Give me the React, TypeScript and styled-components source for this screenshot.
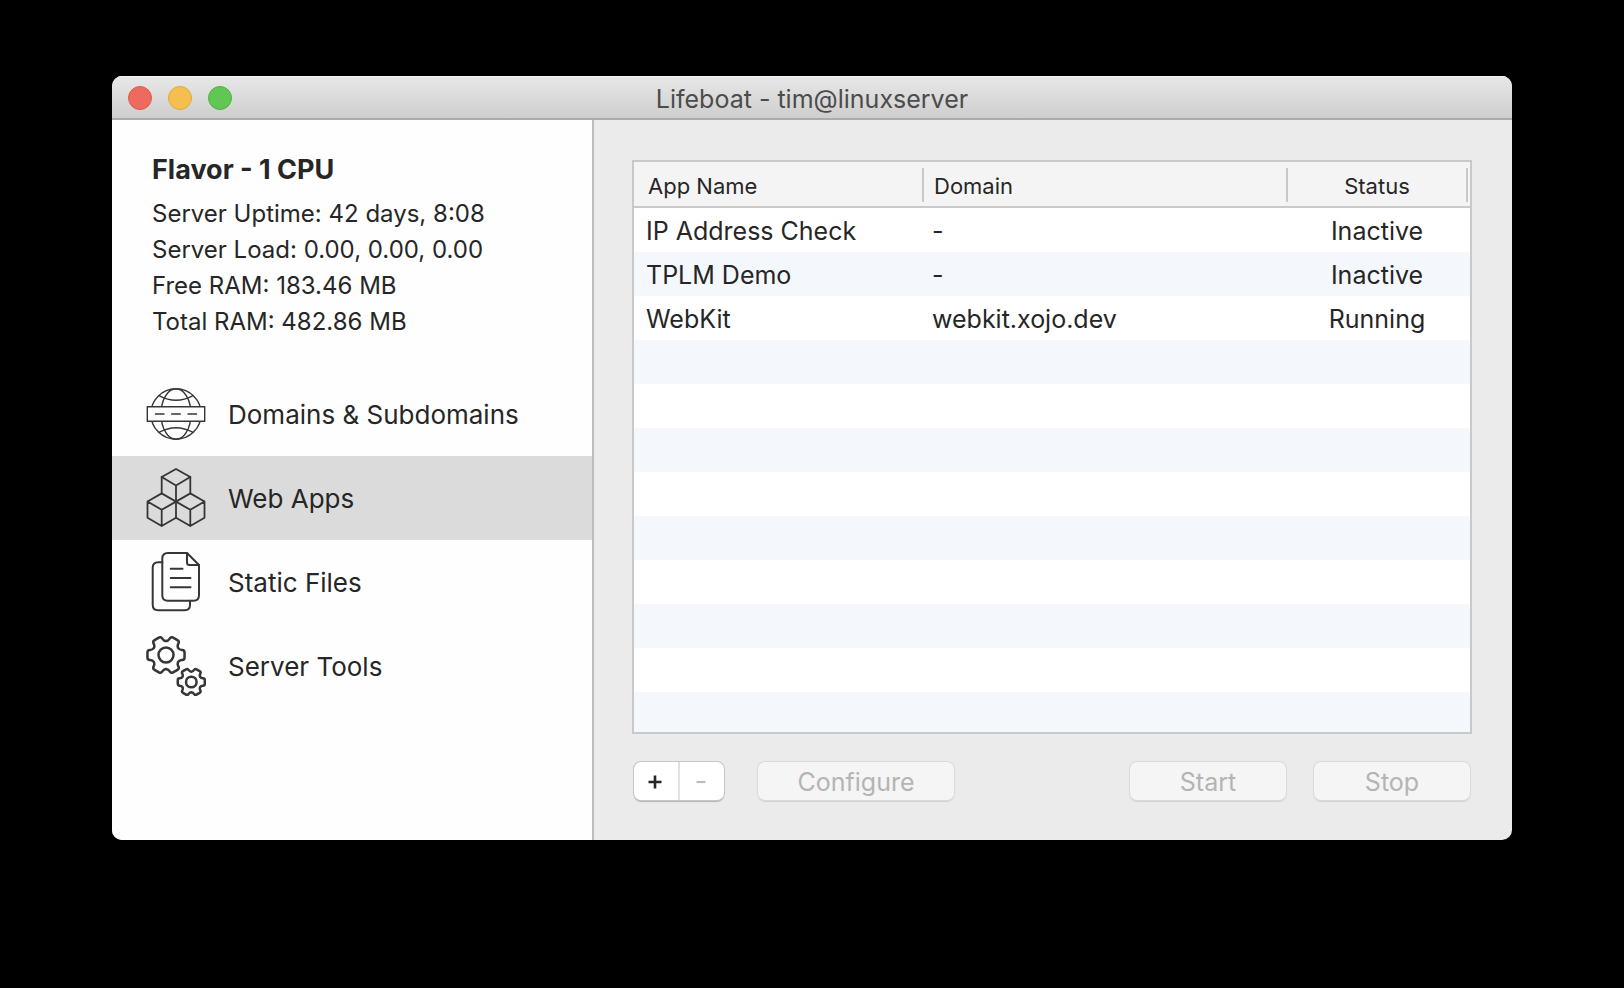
import React, { useState } from "react";
import styled, { createGlobalStyle } from "styled-components";

const GlobalStyle = createGlobalStyle`
  *, *::before, *::after { box-sizing: border-box; }
  body {
    margin: 0;
    background: #000;
    color: #262626;
    font-family: Inter, "Liberation Sans", sans-serif;
    font-size: 25px;
  }
  button { font: inherit; }
`;

const Desktop = styled.main`
  min-height: 100vh;
  padding: 76px 112px;
  background: #000;
`;

const Window = styled.section`
  min-width: 1160px;
  overflow: hidden;
  border-radius: 10px;
  background: #ebebeb;
`;

const TitleBar = styled.header`
  display: grid;
  grid-template-columns: 1fr auto 1fr;
  align-items: center;
  height: 44px;
  padding: 2px 16px 0;
  border-bottom: 2px solid #ababab;
  background: linear-gradient(#e8e8e8, #cecece);
  box-shadow: inset 0 1px 0 #f4f4f4;
`;

const Lights = styled.div`
  display: flex;
  gap: 16px;
`;

const Light = styled.button<{ $fill: string; $edge: string }>`
  width: 24px;
  height: 24px;
  padding: 0;
  border: 1px solid ${(p) => p.$edge};
  border-radius: 50%;
  background: ${(p) => p.$fill};
`;

const Title = styled.h1`
  margin: 0;
  padding-top: 2px;
  color: #4c4c4c;
  font-size: 25px;
  font-weight: 400;
  line-height: 32px;
`;

const Body = styled.div`
  display: grid;
  grid-template-columns: 482px minmax(0, 1fr);
`;

const Sidebar = styled.aside`
  border-right: 2px solid #bdbdbd;
  background: #fefefe;
`;

const Info = styled.div`
  padding: 34px 40px 32px;
`;

const Flavor = styled.h2`
  margin: 0 0 10px;
  font-size: 27px;
  font-weight: 700;
  line-height: 32px;
`;

const Stat = styled.p`
  margin: 0;
  font-size: 24px;
  line-height: 36px;
`;

const NavItem = styled.button<{ $active: boolean }>`
  display: flex;
  align-items: center;
  gap: 22px;
  width: 100%;
  height: 84px;
  padding: 0 34px;
  border: 0;
  background: ${(p) => (p.$active ? "#dbdbdb" : "transparent")};
  color: #262626;
  font-size: 26px;
  text-align: left;
`;

const NavLabel = styled.span`
  padding-top: 2px;
  line-height: 32px;
`;

const Glyph = styled.svg`
  flex: none;
  width: 60px;
  height: 60px;
  fill: none;
  stroke: #363636;
  stroke-linejoin: round;
  stroke-linecap: round;
`;

const Content = styled.div`
  padding: 40px 40px 40px 38px;
`;

const TableFrame = styled.div`
  border: 2px solid #c9c9c9;
  background: #fff;
`;

const Table = styled.table`
  width: 100%;
  border-collapse: separate;
  border-spacing: 0;
  table-layout: fixed;
`;

const NameCol = styled.col`
  width: 290px;
`;
const StatusCol = styled.col`
  width: 180px;
`;
const EdgeCol = styled.col`
  width: 2px;
`;

const HeadCell = styled.th`
  height: 46px;
  padding: 6px 0 4px;
  border-bottom: 2px solid #c9c9c9;
  background: #f4f4f4;
  font-size: 22px;
  font-weight: 400;
`;

const HeadLabel = styled.div<{ $align?: "left" | "center"; $inset?: number }>`
  padding-top: 2px;
  padding-left: ${(p) => p.$inset ?? 0}px;
  border-right: 2px solid #c9c9c9;
  line-height: 32px;
  text-align: ${(p) => p.$align ?? "left"};
`;

const Row = styled.tr`
  height: 44px;
  &:nth-child(even) { background: #f4f7fc; }
  &:last-child { height: 40px; }
`;

const Cell = styled.td<{ $align?: "left" | "center"; $inset?: number }>`
  padding: 2px 2px 0 ${(p) => p.$inset ?? 0}px;
  line-height: 32px;
  text-align: ${(p) => p.$align ?? "left"};
`;

const Actions = styled.div`
  display: flex;
  align-items: center;
  margin-top: 28px;
  padding: 0 2px;
`;

const Segmented = styled.div`
  display: grid;
  grid-template-columns: 44px 46px;
  height: 38px;
  margin-right: 34px;
  border-radius: 7px;
  background: #fff;
  box-shadow: 0 0 0 1px #c6c6c6, 0 2px 1px #b4b4b4;
`;

const Segment = styled.button`
  display: flex;
  align-items: center;
  justify-content: center;
  padding: 2px 2px 0 0;
  border: 0;
  background: transparent;
  color: #262626;
  & + & { border-left: 2px solid #e1e1e1; }
  &:disabled { color: #bdbdbd; }
`;

const SegmentGlyph = styled.svg`
  width: 14px;
  height: 14px;
  stroke: currentColor;
`;

const PushButton = styled.button<{ $width: number }>`
  width: ${(p) => p.$width}px;
  height: 38px;
  padding: 2px 0 0;
  border: 0;
  border-radius: 7px;
  background: #f5f5f5;
  box-shadow: 0 0 0 1px #dadada, 0 2px 1px #d2d2d2;
  color: #b4b4b4;
  line-height: 36px;
`;

const RunControls = styled.div`
  display: flex;
  gap: 28px;
  margin-left: auto;
`;

type Point = [number, number];

// Outline of a six-toothed gear with softened corners.
function gearPath(cx: number, cy: number, outer: number): string {
  const root = outer * 0.74;
  const pts: Point[] = [];
  const at = (deg: number, r: number) => {
    const a = (deg * Math.PI) / 180;
    pts.push([cx + r * Math.cos(a), cy + r * Math.sin(a)]);
  };
  for (let t = 0; t < 360; t += 60) {
    at(t - 21, root);
    at(t - 15, outer);
    at(t + 15, outer);
    at(t + 21, root);
  }
  const cut = outer * 0.13;
  const toward = ([x, y]: Point, [u, v]: Point) => {
    const len = Math.hypot(u - x, v - y);
    return `${(x + ((u - x) * cut) / len).toFixed(2)} ${(y + ((v - y) * cut) / len).toFixed(2)}`;
  };
  return (
    pts
      .map((p, i) => {
        const prev = pts[(i + pts.length - 1) % pts.length];
        const next = pts[(i + 1) % pts.length];
        return `${i ? "L" : "M"}${toward(p, prev)}Q${p[0].toFixed(2)} ${p[1].toFixed(2)} ${toward(p, next)}`;
      })
      .join("") + "Z"
  );
}

const GlobeIcon = () => (
  <Glyph viewBox="0 0 60 60" strokeWidth="1.4" aria-hidden="true">
    <circle cx="30" cy="30" r="25.2" />
    <ellipse cx="30" cy="30" rx="15" ry="25.2" />
    <path d="M13 11.6Q30 21 47 11.6M13 48.4Q30 39 47 48.4" />
    <path d="M1.3 22.7H58.7V37.3H1.3Z" fill="#fefefe" strokeLinejoin="miter" />
    <path d="M9.5 30H18M25.7 30H34.3M42 30H50.5" />
  </Glyph>
);

const CubesIcon = () => (
  <Glyph viewBox="0 0 60 60" strokeWidth="1.8" aria-hidden="true">
    <path d="M30 1L44.3 9V25.4L30 33.6L15.7 25.4V9Z" />
    <path d="M15.7 9L30 17.6L44.3 9M30 17.6V49.7" />
    <path d="M15.7 25.4L1.5 33.5V49.7L15.7 58L30 49.7M1.5 33.5L15.7 41.8L30 33.6M15.7 41.8V58" />
    <path d="M44.3 25.4L58.5 33.5V49.7L44.3 58L30 49.7M58.5 33.5L44.3 41.8L30 33.6M44.3 41.8V58" />
  </Glyph>
);

const FilesIcon = () => (
  <Glyph viewBox="0 0 60 60" strokeWidth="2" aria-hidden="true">
    <path d="M16.3 10.3H12.2Q6.7 10.3 6.7 15.8V52.8Q6.7 58.3 12.2 58.3H38.5Q44 58.3 44 52.8V48.8" />
    <path d="M41 1H21.8Q16.3 1 16.3 6.5V43.3Q16.3 48.8 21.8 48.8H47.5Q53 48.8 53 43.3V13Z" />
    <path d="M41 1V10.5Q41 13 43.5 13H53M24.7 16.7H36.5M24.7 26H44.5M24.7 35.3H44.5" />
  </Glyph>
);

const GearsIcon = () => (
  <Glyph viewBox="0 0 60 60" strokeWidth="2.5" aria-hidden="true">
    <path d={gearPath(20, 19, 19.2)} />
    <circle cx="20" cy="19" r="7.5" />
    <path d={gearPath(45.3, 46, 14)} />
    <circle cx="45.3" cy="46" r="5.3" />
  </Glyph>
);

const sections = [
  { label: "Domains & Subdomains", Icon: GlobeIcon },
  { label: "Web Apps", Icon: CubesIcon },
  { label: "Static Files", Icon: FilesIcon },
  { label: "Server Tools", Icon: GearsIcon },
];

const stats = [
  "Server Uptime: 42 days, 8:08",
  "Server Load: 0.00, 0.00, 0.00",
  "Free RAM: 183.46 MB",
  "Total RAM: 482.86 MB",
];

const apps = [
  { name: "IP Address Check", domain: "-", status: "Inactive" },
  { name: "TPLM Demo", domain: "-", status: "Inactive" },
  { name: "WebKit", domain: "webkit.xojo.dev", status: "Running" },
];

const VISIBLE_ROWS = 12;

export default function App() {
  const [section, setSection] = useState("Web Apps");

  return (
    <>
      <GlobalStyle />
      <Desktop>
        <Window>
          <TitleBar>
            <Lights>
              <Light $fill="#ed6a5f" $edge="#dc5b50" aria-label="Close" />
              <Light $fill="#f5bf50" $edge="#e0a93b" aria-label="Minimize" />
              <Light $fill="#62c655" $edge="#53b144" aria-label="Zoom" />
            </Lights>
            <Title>Lifeboat - tim@linuxserver</Title>
          </TitleBar>
          <Body>
            <Sidebar>
              <Info>
                <Flavor>Flavor - 1 CPU</Flavor>
                {stats.map((line) => (
                  <Stat key={line}>{line}</Stat>
                ))}
              </Info>
              <nav>
                {sections.map(({ label, Icon }) => (
                  <NavItem
                    key={label}
                    $active={label === section}
                    aria-current={label === section ? "page" : undefined}
                    onClick={() => setSection(label)}
                  >
                    <Icon />
                    <NavLabel>{label}</NavLabel>
                  </NavItem>
                ))}
              </nav>
            </Sidebar>
            <Content>
              <TableFrame>
                <Table>
                  <colgroup>
                    <NameCol />
                    <col />
                    <StatusCol />
                    <EdgeCol />
                  </colgroup>
                  <thead>
                    <tr>
                      <HeadCell scope="col">
                        <HeadLabel $inset={14}>App Name</HeadLabel>
                      </HeadCell>
                      <HeadCell scope="col">
                        <HeadLabel $inset={10}>Domain</HeadLabel>
                      </HeadCell>
                      <HeadCell scope="col">
                        <HeadLabel $align="center">Status</HeadLabel>
                      </HeadCell>
                      <HeadCell as="td" />
                    </tr>
                  </thead>
                  <tbody>
                    {Array.from({ length: VISIBLE_ROWS }, (_, i) => (
                      <Row key={i}>
                        <Cell $inset={12}>{apps[i]?.name}</Cell>
                        <Cell $inset={8}>{apps[i]?.domain}</Cell>
                        <Cell $align="center">{apps[i]?.status}</Cell>
                        <td />
                      </Row>
                    ))}
                  </tbody>
                </Table>
              </TableFrame>
              <Actions>
                <Segmented>
                  <Segment aria-label="Add app">
                    <SegmentGlyph viewBox="0 0 14 14" strokeWidth="2.6">
                      <path d="M0.5 7H13.5M7 0.5V13.5" />
                    </SegmentGlyph>
                  </Segment>
                  <Segment aria-label="Remove app" disabled>
                    <SegmentGlyph viewBox="0 0 14 14" strokeWidth="2.2">
                      <path d="M2.5 7H11.5" />
                    </SegmentGlyph>
                  </Segment>
                </Segmented>
                <PushButton $width={196} disabled>Configure</PushButton>
                <RunControls>
                  <PushButton $width={156} disabled>Start</PushButton>
                  <PushButton $width={156} disabled>Stop</PushButton>
                </RunControls>
              </Actions>
            </Content>
          </Body>
        </Window>
      </Desktop>
    </>
  );
}
